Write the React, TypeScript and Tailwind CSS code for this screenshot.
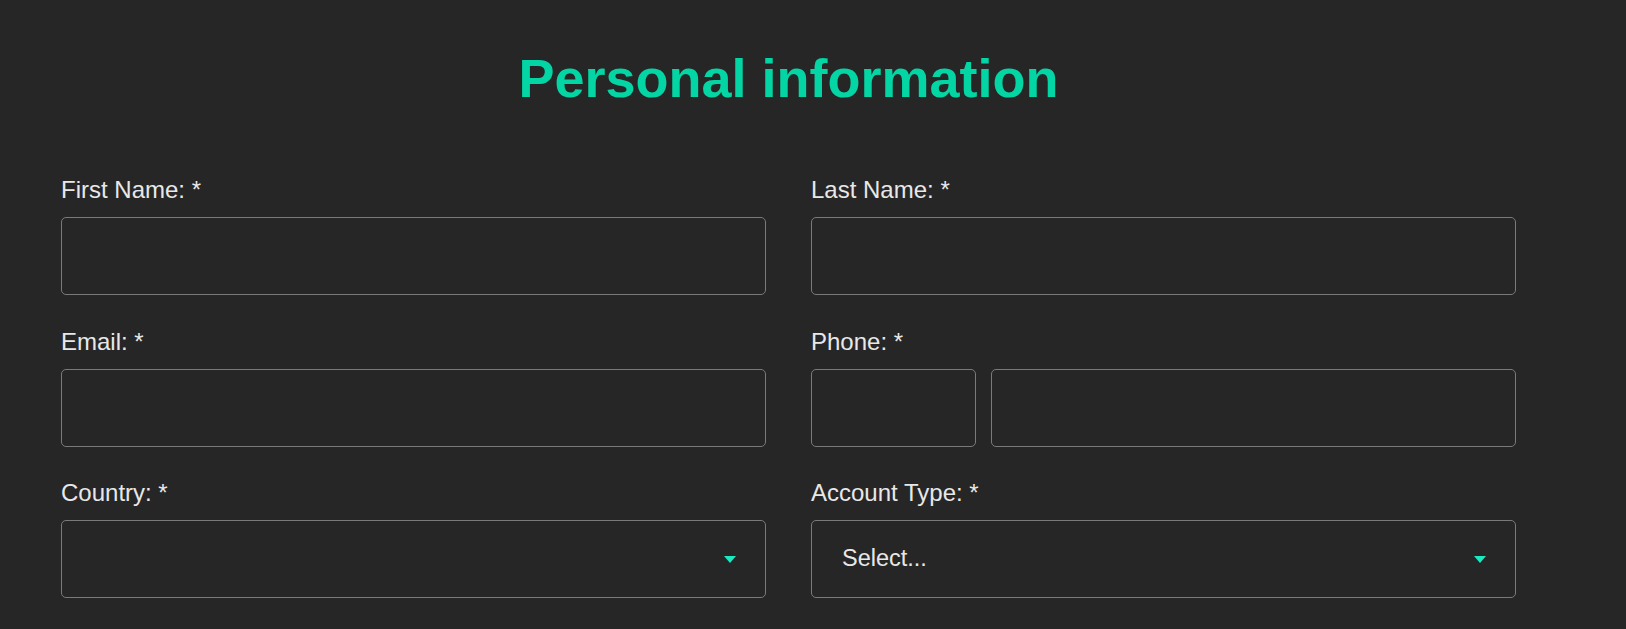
import React from "react";

const font = { fontFamily: '"Liberation Sans", Arial, sans-serif' };

function Label({ children }: { children: React.ReactNode }) {
  return (
    <label className="block text-[24px] leading-[27px] text-[#e8e8e8] mb-[14px]">
      {children}
    </label>
  );
}

function Box({ className = "" }: { className?: string }) {
  return (
    <input
      className={`h-[78px] rounded-[5px] border border-[#7a7a7a] bg-[#262626] outline-none ${className}`}
    />
  );
}

function Select({ text }: { text?: string }) {
  return (
    <div className="relative flex h-[78px] w-full items-center rounded-[5px] border border-[#7a7a7a] bg-[#262626] pl-[30px] pr-[30px]">
      <span className="text-[23.5px] text-[#e8e8e8]">{text ?? ""}</span>
      <span className="absolute right-[29px] top-[35px] h-0 w-0 border-l-[6.5px] border-r-[6.5px] border-t-[7px] border-l-transparent border-r-transparent border-t-[#1de9c0]" />
    </div>
  );
}

export default function App() {
  return (
    <div className="min-h-[629px] w-full bg-[#262626]" style={font}>
      <div className="ml-[61px] w-[1455px] pt-[52px]">
        <h1 className="text-center text-[54px] font-bold leading-[53px] text-[#03d6a4]">
          Personal information
        </h1>
        <div className="mt-[71px] grid grid-cols-2 gap-x-[45px] gap-y-[32.5px]">
          <div>
            <Label>First Name: *</Label>
            <Box className="w-full" />
          </div>
          <div>
            <Label>Last Name: *</Label>
            <Box className="w-full" />
          </div>
          <div>
            <Label>Email: *</Label>
            <Box className="w-full" />
          </div>
          <div>
            <Label>Phone: *</Label>
            <div className="flex gap-[15px]">
              <Box className="w-[165px] shrink-0" />
              <Box className="min-w-0 flex-1" />
            </div>
          </div>
          <div>
            <Label>Country: *</Label>
            <Select />
          </div>
          <div>
            <Label>Account Type: *</Label>
            <Select text="Select..." />
          </div>
        </div>
      </div>
    </div>
  );
}
